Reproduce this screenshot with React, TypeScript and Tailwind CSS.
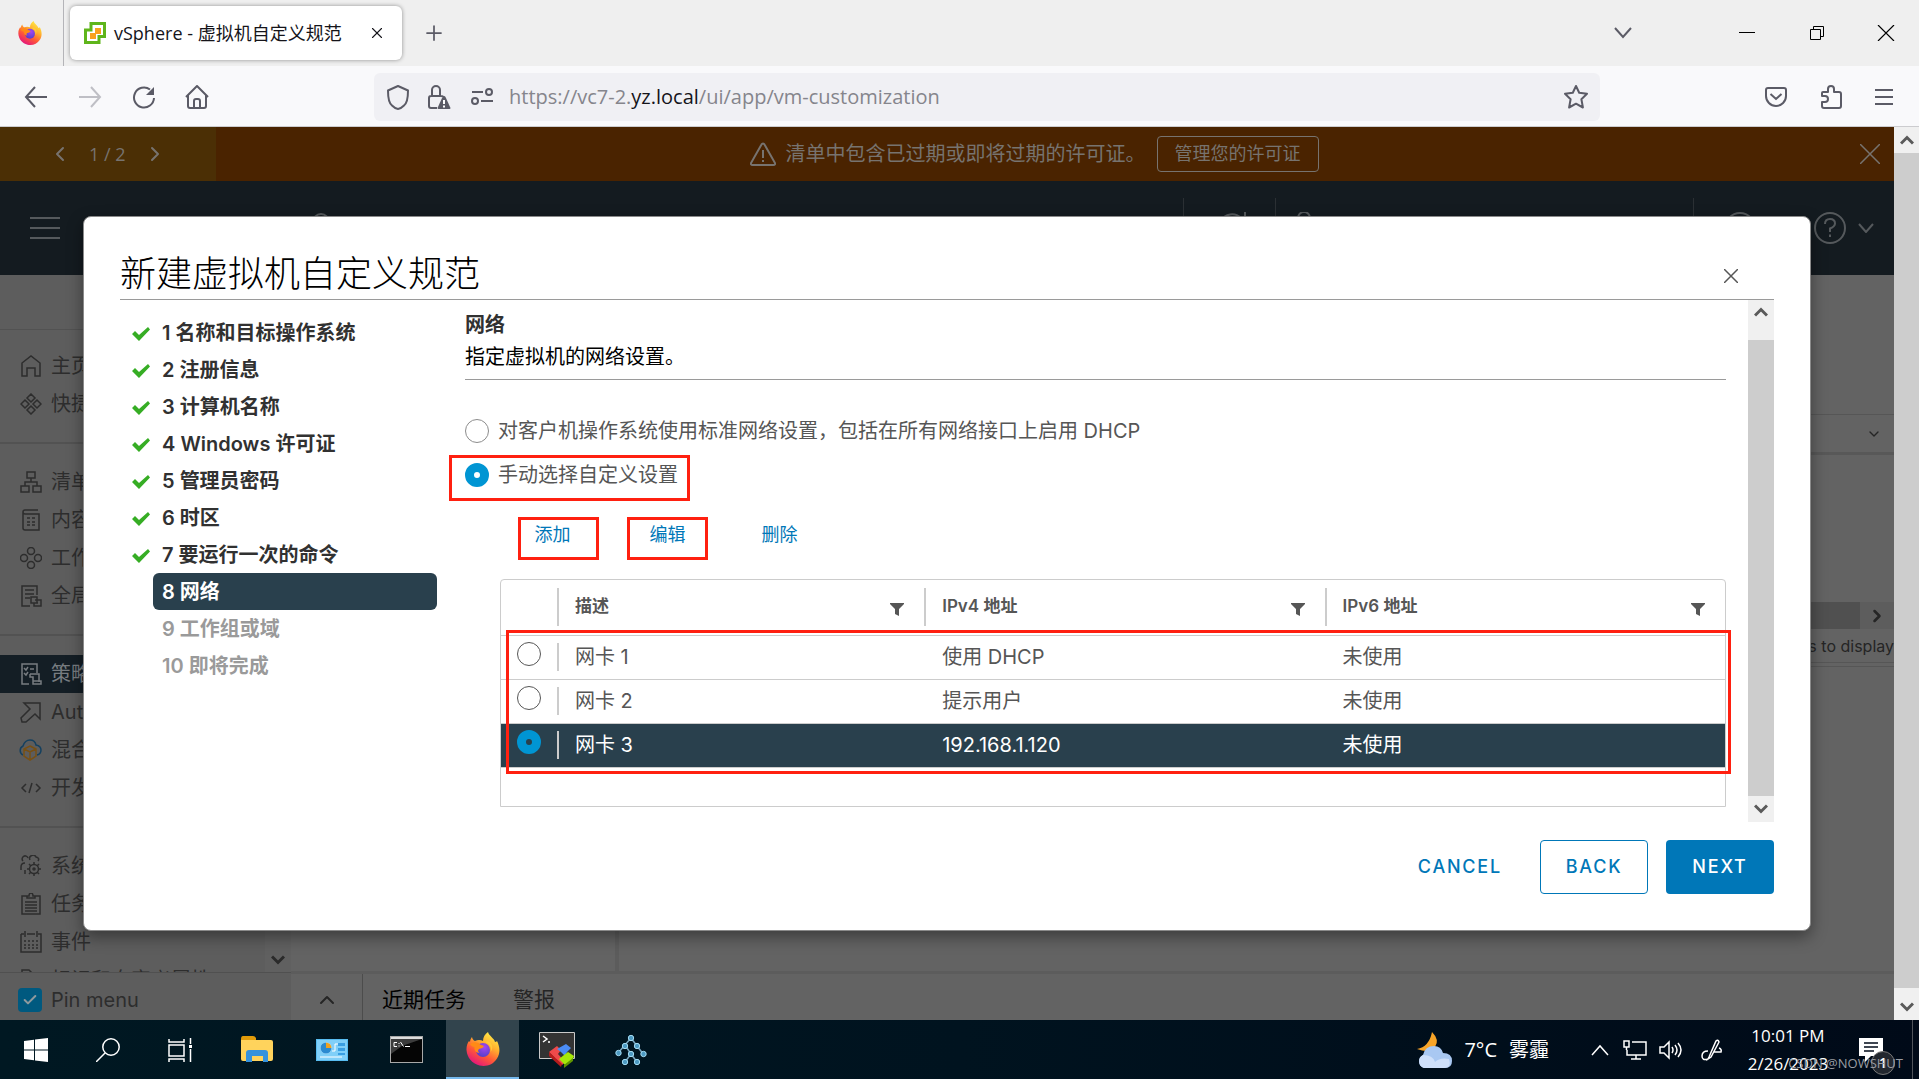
import { useState } from 'react';
import type { ReactNode } from 'react';
import { Check, ChevronDown, ChevronLeft, ChevronRight, ChevronUp, Plus, X } from 'lucide-react';

const FirefoxLogo = ({ className }: { className: string }) => (
  <svg viewBox="0 0 34 34" className={className} aria-hidden="true">
    <defs>
      <linearGradient id="ffBody" x1="0.85" y1="0.05" x2="0.3" y2="1">
        <stop offset="0" stopColor="#fff04a" />
        <stop offset="0.35" stopColor="#ffb02e" />
        <stop offset="0.65" stopColor="#ff5a36" />
        <stop offset="1" stopColor="#e3127f" />
      </linearGradient>
      <radialGradient id="ffGlobe" cx="0.6" cy="0.3" r="0.8">
        <stop offset="0" stopColor="#a545f2" />
        <stop offset="1" stopColor="#4b3fc4" />
      </radialGradient>
    </defs>
    <path d="M4 10 C4 8 5 6 6 5 C6.400 7 7.500 8.500 9 9 C12 7.500 15 8 17 9 C17 5 19 2 22 0 C23 4 28 6 29 10 C30.500 10 31 9 31 9 C34 15 34.500 21 31 26.500 C27 33 20 35 13.500 33.500 C6 31.500 1 25.500 0.500 18 C0.300 14.500 1.500 11 3 9 Z" fill="url(#ffBody)" />
    <circle cx="17" cy="18" r="7" fill="url(#ffGlobe)" />
    <path d="M4 12 C8 9.500 12 10 14 12.500 L18 14 C17 16.500 14 16.500 13 17 C11.500 18 12 20 13.500 21 C10 21 8 18 8.500 15 C7 15 5 14 4 12Z" fill="#ff8a16" />
    <path d="M19 10 C24 12 26 16 24.500 20 C28 16 26 11 22 9Z" fill="#ffca38" />
  </svg>
);

// Thin line icons of the side menu, 22x22
const ICONS: Record<string, ReactNode> = {
  home: <path d="M2 21V8l9-7 9 7v13h-5v-8H7v8z" />,
  shortcuts: <path d="M11 1l4 4-4 4-4-4zM5 7l4 4-4 4-4-4zM17 7l4 4-4 4-4-4zM11 13l4 4-4 4-4-4z" />,
  inventory: <path d="M7 1h8v6H7zM1 15h8v6H1zM13 15h8v6h-8zM11 7v4M5 15v-4h12v4" />,
  library: <path d="M3 3v16a2 2 0 0 0 2 2h14V5H5a2 2 0 0 1 0-4h13M7 9h3M12 9h3M7 13h3M12 13h3M7 16h3M12 16h3" />,
  workload: <><circle cx="11" cy="4" r="3.500" /><circle cx="4" cy="11" r="3.500" /><circle cx="18" cy="11" r="3.500" /><circle cx="11" cy="18" r="3.500" /></>,
  lists: <path d="M10 21H2V1h15v9M5 5h9M5 9h9M5 13h5M11 12h6v6h-6zM15 15h6v6h-7v-3M16 18h2" />,
  policy: <path d="M9 21H2V1h15v9M4 5l2 2 2-3M10 6h4M4 10l2 2 2-3M10 11h9v8M10 11v3h3v7h8v-3h-8" />,
  deploy: <path d="M4 2h16v16l-5-5-9 8H2l-1-4 9-9z" />,
  dev: <path d="M6 7l-4 4 4 4M16 7l4 4-4 4M12 6l-3 10" />,
  admin: <><circle cx="14" cy="14" r="4.500" /><circle cx="14" cy="14" r="1" /><path d="M14 7v3M14 18v3M7 14h3M18 14h3M9 9l2 2M17 17l2 2M19 9l-2 2M9 19l2-2M3 6a3 3 0 1 1 5-3M1 15v-3q0-4 4-4M10 5a3 3 0 0 1 6-3q4 1 2 4M5 15v4" /></>,
  tasks: <path d="M7 3H2v18h18V3h-5M7 5V3h2q0-3 2-3t2 3h2v2zM5 9h12M5 12h12M5 15h12M5 18h12" />,
  events: <><path d="M1 3h3M7 3h8M18 3h3v18H1V3M5 0v6M17 0v6" /><path strokeDasharray="2 2" d="M4 10h14M4 14h14M4 17h14" /></>,
  tags: <path d="M2 21V1h7l5 5v15z" />,
};

const SideIcon = ({ name }: { name: string }) => {
  if (name === 'hybrid') {
    return (
      <svg viewBox="0 0 24 22" className="-ml-0.5 h-6 w-6 shrink-0" fill="none" strokeWidth="1.500" aria-hidden="true">
        <path d="M5 16a5 5 0 0 1 0-9q2-6 7-6t6 5q5 1 5 5t-4 5" stroke="#14405f" />
        <path d="M12 7l6 3v7l-6 4-6-4v-7zM6 10l6 3 6-3M12 13v8" stroke="#785013" />
      </svg>
    );
  }
  return (
    <svg viewBox="0 0 22 22" className="size-[22px] shrink-0" fill="none" stroke="currentColor" strokeWidth="1.500" aria-hidden="true">
      {ICONS[name]}
    </svg>
  );
};

const menuGroups = [
  [
    { icon: 'home', label: '主页' },
    { icon: 'shortcuts', label: '快捷方式' },
  ],
  [
    { icon: 'inventory', label: '清单' },
    { icon: 'library', label: '内容库' },
    { icon: 'workload', label: '工作负载' },
    { icon: 'lists', label: '全局清单' },
  ],
  [
    { icon: 'policy', label: '策略配置', active: true },
    { icon: 'deploy', label: 'Auto Deploy' },
    { icon: 'hybrid', label: '混合云服务' },
    { icon: 'dev', label: '开发人员中心' },
  ],
  [
    { icon: 'admin', label: '系统管理' },
    { icon: 'tasks', label: '任务' },
    { icon: 'events', label: '事件' },
    { icon: 'tags', label: '标记和自定义属性' },
  ],
];

const steps = [
  '名称和目标操作系统',
  '注册信息',
  '计算机名称',
  'Windows 许可证',
  '管理员密码',
  '时区',
  '要运行一次的命令',
  '网络',
  '工作组或域',
  '即将完成',
];
const CURRENT_STEP = 8;

const nics = [
  { name: '网卡 1', ipv4: '使用 DHCP', ipv6: '未使用' },
  { name: '网卡 2', ipv4: '提示用户', ipv6: '未使用' },
  { name: '网卡 3', ipv4: '192.168.1.120', ipv6: '未使用' },
];

const BrowserChrome = () => (
  <header className="shrink-0 font-['Open_Sans','Noto_Sans_CJK_SC',sans-serif] text-[#5b5b66]">
    <div className="flex h-[66px] items-center bg-[#efefef]">
      <div className="flex h-full w-16 shrink-0 items-center border-r border-[#b4b4b8] pl-[18px]">
        <FirefoxLogo className="h-7 w-6" />
      </div>
      <div className="ml-1.5 flex h-[54px] w-[332px] items-center rounded-md bg-white pr-4 pl-3.5 shadow-[0_0_4px_rgba(0,0,0,0.4)]">
        <svg viewBox="0 0 22 22" className="size-[22px]" fill="none" aria-hidden="true">
          <path d="M7 1.500h13.500v13H15v6H1.500V8H7z" stroke="#5fb51b" strokeWidth="3" />
          <path d="M11 6h6v6h-6zM6 11h6v6H6z" fill="#f9a21b" />
        </svg>
        <span className="ml-2 flex-1 text-lg whitespace-nowrap text-[#15141a]">vSphere - 虚拟机自定义规范</span>
        <button aria-label="关闭标签页"><X className="size-[18px] text-[#15141a]" strokeWidth={1.5} /></button>
      </div>
      <button aria-label="新建标签页" className="ml-5"><Plus className="size-6" strokeWidth={1.75} /></button>
      <div className="ml-auto flex items-center text-black">
        <button aria-label="列出所有标签页" className="mr-[107px] text-[#5b5b66]">
          <svg viewBox="0 0 18 12" className="h-3 w-[18px]" fill="none" stroke="currentColor" strokeWidth="2"><path d="M1 1l8 9 8-9" /></svg>
        </button>
        <button aria-label="最小化" className="mr-[54px]">
          <svg viewBox="0 0 16 14" className="h-3.5 w-4" stroke="currentColor"><path d="M0 6.500h16" /></svg>
        </button>
        <button aria-label="还原" className="mr-[52px]">
          <svg viewBox="0 0 16 16" className="size-4" fill="none" stroke="currentColor"><path d="M1.500 4.500h10v10h-10zM4.500 4V1.500h10v10H12" /></svg>
        </button>
        <button aria-label="关闭" className="mr-6">
          <svg viewBox="0 0 18 16" className="h-4 w-[18px]" stroke="currentColor" strokeWidth="1.200"><path d="M1 0l16 16M17 0L1 16" /></svg>
        </button>
      </div>
    </div>
    <div className="flex h-[61px] items-center border-b border-[#cccccf] bg-[#f9f9fb] pt-0.5 pr-[26px] pl-6">
      <button aria-label="后退">
        <svg viewBox="0 0 24 24" className="size-6" fill="none" stroke="currentColor" strokeWidth="2"><path d="M23 12H2M11 2L2 12l9 10" /></svg>
      </button>
      <button aria-label="前进" className="ml-[30px] text-[#bfbfc5]">
        <svg viewBox="0 0 24 24" className="size-6" fill="none" stroke="currentColor" strokeWidth="2"><path d="M1 12h21M13 2l9 10-9 10" /></svg>
      </button>
      <button aria-label="重新加载" className="ml-[30px]">
        <svg viewBox="0 0 24 24" className="size-6" fill="none" stroke="currentColor" strokeWidth="2"><path d="M22 13a10 10 0 1 1-4-8.500" /><path d="M22 2v8h-8z" fill="currentColor" stroke="none" /></svg>
      </button>
      <button aria-label="主页" className="ml-[29px]">
        <svg viewBox="0 0 24 24" className="size-6" fill="none" stroke="currentColor" strokeWidth="2" strokeLinejoin="round"><path d="M1 12L12 1l11 11M3 10v11q0 2 2 2h14q2 0 2-2V10M9 23v-7q0-2 2-2h2q2 0 2 2v7" /></svg>
      </button>
      <div className="mr-[164px] ml-[165px] flex h-12 flex-1 items-center rounded-md bg-[#f0f0f4] pr-3 pl-3">
        <svg viewBox="0 0 24 26" className="h-[26px] w-6" fill="none" stroke="currentColor" strokeWidth="2" strokeLinejoin="round"><path d="M12 2l10 4.500q0 12-4 15-3 3-6 3.500-3-.5-6-3.500-4-3-4-15z" /></svg>
        <svg viewBox="0 0 24 26" className="ml-[17px] h-[26px] w-6" fill="none" stroke="currentColor" strokeWidth="2">
          <path d="M10 24H4q-2 0-2-2v-8q0-2 2-2h10q2 0 2 1M5 12V6a4 4 0 0 1 8 0v6" />
          <path d="M17 12q1 0 1.500 1l5 11q0 1-1 1h-11q-1 0-1-1l5-11q.5-1 1.500-1z" fill="currentColor" stroke="none" />
          <path d="M17 16v4M17 21.500v2" stroke="#fff" />
        </svg>
        <svg viewBox="0 0 22 20" className="ml-5 h-5 w-[22px]" fill="none" stroke="currentColor" strokeWidth="2"><circle cx="18" cy="5" r="3" /><circle cx="4" cy="14" r="3" /><path d="M1 5h11M10 14h12" /></svg>
        <label className="relative ml-4 flex-1 text-xl text-[#85858c]">
          https://vc7-2.<span className="text-[#15141a]">yz.local</span>/ui/app/vm-customization
          <input type="url" aria-label="地址栏" className="absolute inset-0 w-full bg-transparent outline-none" />
        </label>
        <button aria-label="加入书签">
          <svg viewBox="0 0 24 24" className="size-6" fill="none" stroke="currentColor" strokeWidth="2" strokeLinejoin="round"><path d="M12 1l3.200 6.800 7.800 1-5.600 5.400 1.500 8.300L12 18.700 5.100 22.500l1.500-8.300L1 8.800l7.800-1z" /></svg>
        </button>
      </div>
      <button aria-label="Pocket">
        <svg viewBox="0 0 24 22" className="h-[22px] w-6" fill="none" stroke="currentColor" strokeWidth="2"><path d="M4 2h16q2 0 2 2v6a10 10 0 0 1-20 0V4q0-2 2-2zM6.500 8l5.500 5 5.500-5" /></svg>
      </button>
      <button aria-label="扩展" className="ml-[31px]">
        <svg viewBox="0 0 24 26" className="h-[26px] w-6" fill="none" stroke="currentColor" strokeWidth="2" strokeLinejoin="round"><path d="M3 12V9q0-1 1-1h5V5a3 3 0 0 1 6 0v3h5q2 0 2 2v12q0 2-2 2H5q-2 0-2-2v-4h3a2.500 2.500 0 0 0 0-6z" /></svg>
      </button>
      <button aria-label="菜单" className="ml-8">
        <svg viewBox="0 0 18 18" className="size-[18px]" stroke="currentColor" strokeWidth="2"><path d="M0 2h18M0 9h18M0 16h18" /></svg>
      </button>
    </div>
  </header>
);

const ScrollArrow = ({ up }: { up?: boolean }) => (
  <svg viewBox="0 0 14 12" className="h-3 w-3.5" fill="none" stroke="#5a5a5a" strokeWidth="3" aria-hidden="true">
    <path d={up ? 'M1 9.500l6-6 6 6' : 'M1 2.500l6 6 6-6'} />
  </svg>
);

const Banner = () => (
  <div className="flex h-[54px] shrink-0 items-center bg-[#4a2300] text-[#77736f]">
    <div className="flex h-full w-[216px] items-center gap-[17px] bg-[#4b2f05] pl-12">
      <button aria-label="上一条"><ChevronLeft className="size-6" strokeWidth={2} /></button>
      <span className="font-['Open_Sans',sans-serif] text-lg">1 / 2</span>
      <button aria-label="下一条"><ChevronRight className="size-6" strokeWidth={2} /></button>
    </div>
    <div className="flex flex-1 items-center justify-center pr-2">
      <svg viewBox="0 0 26 24" className="h-6 w-[26px]" fill="none" stroke="currentColor" strokeWidth="2"><path d="M13 1.500q1 0 1.500 1L25 21q.5 2-1.500 2h-21Q.5 23 1 21L11.500 2.500q.5-1 1.500-1zM13 8v8M13 18v2" /></svg>
      <span className="ml-2.5 text-xl">清单中包含已过期或即将过期的许可证。</span>
      <button className="ml-[11px] h-9 rounded border border-[#77736f] px-[17px] text-lg">管理您的许可证</button>
    </div>
    <button aria-label="关闭" className="mr-3.5">
      <svg viewBox="0 0 20 20" className="size-5" stroke="currentColor" strokeWidth="1.500"><path d="M0 0l20 20M20 0L0 20" /></svg>
    </button>
  </div>
);

const AppHeader = () => (
  <div className="flex h-[94px] shrink-0 items-center bg-[#141b20] text-[#55595c]">
    <button aria-label="导航菜单" className="ml-[30px]">
      <svg viewBox="0 0 30 24" className="h-6 w-[30px]" stroke="currentColor" strokeWidth="2"><path d="M0 2h30M0 12h30M0 22h30" /></svg>
    </button>
    <svg viewBox="0 0 24 24" className="mb-2 ml-[249px] size-6" fill="none" stroke="currentColor" strokeWidth="2"><circle cx="12" cy="10" r="8" /><path d="M18 16l5 6" /></svg>
    <div className="ml-auto flex items-center">
      <span className="h-[60px] w-px bg-[#2b3034]" />
      <svg viewBox="0 0 32 32" className="ml-8 size-8" fill="none" stroke="currentColor" strokeWidth="2"><path d="M29 16a13 13 0 1 1-4-10M29 0v8h-8" /></svg>
      <span className="ml-[27px] h-[60px] w-px bg-[#2b3034]" />
      <svg viewBox="0 0 32 32" className="ml-3 size-8" fill="none" stroke="currentColor" strokeWidth="2"><circle cx="16" cy="6" r="6" /><path d="M4 30q0-14 12-14t12 14" /></svg>
      <span className="ml-[373px] h-[60px] w-px bg-[#2b3034]" />
      <svg viewBox="0 0 32 32" className="ml-[30px] size-8" fill="none" stroke="currentColor" strokeWidth="2"><circle cx="16" cy="16" r="15" /><path d="M9 19q7 8 14 0" /></svg>
      <button aria-label="帮助" className="ml-[58px] flex items-center gap-3">
        <svg viewBox="0 0 32 32" className="size-8" fill="none" stroke="currentColor" strokeWidth="2"><circle cx="16" cy="16" r="15" /><path d="M11 12q0-5 5-5t5 4.500q0 3-5 5V20M16 22.500V25" /></svg>
        <svg viewBox="0 0 16 10" className="h-2.5 w-4" fill="none" stroke="currentColor" strokeWidth="2"><path d="M1 1l7 8 7-8" /></svg>
      </button>
      <span className="w-5" />
    </div>
  </div>
);

const SideMenu = () => (
  <aside className="flex w-[291px] shrink-0 flex-col bg-[#5d5d5d] text-[#2d2d2d]">
    <div className="flex min-h-0 flex-1 overflow-hidden">
      <nav className="w-[265px] pt-[54px]">
        {menuGroups.map((group, i) => (
          <div key={i}>
            <div className={i === 0 ? 'h-[18px] border-t border-[#525252]' : 'flex h-10 items-center'}>
              {i > 0 && <div className="h-0.5 w-full bg-[#525252]" />}
            </div>
            {group.map((item) => (
              <a
                key={item.label}
                href="#"
                className={`flex h-[38px] items-center gap-[9px] pl-5 text-xl whitespace-nowrap ${
                  'active' in item ? 'bg-[#141e25] text-[#777c80]' : ''
                }`}
              >
                <SideIcon name={item.icon} />
                {item.label}
              </a>
            ))}
          </div>
        ))}
      </nav>
      <div className="flex flex-1 items-end justify-center bg-[#606060] pb-1.5">
        <svg viewBox="0 0 14 12" className="h-3 w-3.5" fill="none" stroke="#2a2a2a" strokeWidth="3"><path d="M1 2.500l6 6 6-6" /></svg>
      </div>
    </div>
    <label className="flex h-12 items-center gap-[9px] border-t border-[#505050] pt-1.5 pl-[18px] text-xl">
      <span className="relative flex size-6">
        <input type="checkbox" defaultChecked className="size-6 appearance-none rounded bg-[#00597f]" />
        <Check className="pointer-events-none absolute top-1 left-1 size-4 text-[#8f9a9e]" strokeWidth={3} />
      </span>
      Pin menu
    </label>
  </aside>
);

const Workspace = () => (
  <div className="flex min-w-0 flex-1 flex-col bg-[#636363] text-[#252525]">
    <div className="flex min-h-0 flex-1">
      <div className="w-[328px] border-r-4 border-[#5c5c5c]" />
      <div className="flex flex-1 flex-col">
        <div className="h-[140px] border-b border-[#565656]" />
        <div className="flex h-10 items-center justify-end border-b-[3px] border-[#585858] pr-3">
          <ChevronDown className="size-4" />
        </div>
        <div className="h-[147px]" />
        <div className="flex h-[27px] justify-end bg-[#505050]">
          <span className="flex w-[34px] items-center justify-center bg-[#5d5d5d]"><ChevronRight className="size-5" strokeWidth={3} /></span>
        </div>
        <div className="flex h-[34px] items-center justify-end border-b border-[#565656] text-base">No items to display</div>
        <div className="h-1 border-b border-[#565656]" />
      </div>
    </div>
    <div className="flex h-[49px] items-center border-t-[3px] border-[#5c5c5c] text-[21px]">
      <button aria-label="展开" className="flex h-full w-[72px] items-center justify-center border-r border-[#4c4c4c] pt-1.5">
        <ChevronUp className="size-6" strokeWidth={2} />
      </button>
      <button className="ml-[19px] pt-1.5 text-black">近期任务</button>
      <button className="ml-[47px] pt-1.5">警报</button>
    </div>
  </div>
);

const StepList = () => (
  <ol className="w-[317px] shrink-0 pt-3.5 text-xl font-semibold text-[#313131]">
    {steps.map((step, i) => {
      const n = i + 1;
      return (
        <li key={step} className="flex h-[37px] items-center">
          <span className="w-[33px] shrink-0 pl-3">
            {n < CURRENT_STEP && (
              <svg viewBox="0 0 18 14" className="mt-0.5 h-3.5 w-[18px]" aria-label="已完成"><path d="M0 7l3-3 4 4 9-8 2 2.500L7 14z" fill="#36ad24" /></svg>
            )}
          </span>
          <span
            className={`flex h-full flex-1 items-center rounded-md pl-[9px] whitespace-pre ${
              n === CURRENT_STEP ? 'bg-[#29404d] text-white' : n > CURRENT_STEP ? 'text-[#9a9a9a]' : ''
            }`}
          >
            {n} {step}
          </span>
        </li>
      );
    })}
  </ol>
);

const radioClass =
  'size-6 shrink-0 appearance-none rounded-full border checked:border-9 checked:border-[#0095d3]';

const FilterIcon = () => (
  <svg viewBox="0 0 14 13" className="h-[13px] w-3.5" fill="#565656" aria-hidden="true"><path d="M0 0h14v1L9 6v7l-4-2V6L0 1z" /></svg>
);

const NicTable = () => {
  const [selected, setSelected] = useState(2);
  return (
    <div className="relative ml-[35px] rounded-t border border-[#cccccc] pb-[38px]">
      <table className="w-full table-fixed border-collapse text-left text-xl text-[#565656]">
        <colgroup>
          <col className="w-14" />
          <col className="w-[30%]" />
          <col />
          <col />
        </colgroup>
        <thead>
          <tr className="h-[55px] border-b border-[#cccccc] text-[17px]">
            <td />
            {['描述', 'IPv4 地址', 'IPv6 地址'].map((title) => (
              <th key={title} scope="col" className="p-0 font-semibold">
                <div className="flex h-[38px] items-center justify-between border-l-2 border-[#cccccc] pr-5 pl-4">
                  {title}
                  <button aria-label={`筛选 ${title}`} className="pt-1"><FilterIcon /></button>
                </div>
              </th>
            ))}
          </tr>
        </thead>
        <tbody>
          {nics.map((nic, i) => (
            <tr key={nic.name} className={`h-11 border-b border-[#cccccc] ${selected === i ? 'bg-[#29404d] text-white' : ''}`}>
              <td className="p-0 pl-4">
                <input
                  type="radio"
                  name="nic"
                  aria-label={nic.name}
                  checked={selected === i}
                  onChange={() => setSelected(i)}
                  className={`${radioClass} mb-1.5 block border-[#565656]`}
                />
              </td>
              <td className="p-0"><div className="border-l-2 border-[#cccccc] pl-4 leading-7">{nic.name}</div></td>
              <td className="p-0 pl-[18px] leading-7">{nic.ipv4}</td>
              <td className="p-0 pl-[18px] leading-7">{nic.ipv6}</td>
            </tr>
          ))}
        </tbody>
      </table>
      <div className="pointer-events-none absolute top-[50px] -right-1.5 left-[5px] h-[144px] border-3 border-[#ff2010]" />
    </div>
  );
};

const NetworkStep = () => (
  <section className="min-w-0 flex-1 pr-[22px] pl-7">
    <h2 className="pt-[11px] text-xl leading-7 font-bold text-[#313131]">网络</h2>
    <p className="border-b border-[#9a9a9a] pt-1 pb-2 text-xl leading-7 text-black">指定虚拟机的网络设置。</p>
    <div className="mt-[37px] text-xl text-[#565656]">
      <label className="flex h-7 items-center gap-[9px]">
        <input type="radio" name="mode" className={`${radioClass} border-[#8c8c8c]`} />
        对客户机操作系统使用标准网络设置，包括在所有网络接口上启用 DHCP
      </label>
      <label className="relative mt-4 flex h-7 w-fit items-center gap-[9px]">
        <input type="radio" name="mode" defaultChecked className={`${radioClass} border-[#8c8c8c]`} />
        手动选择自定义设置
        <span className="pointer-events-none absolute -top-1.5 -right-3 -bottom-3 -left-4 border-3 border-[#ff2010]" />
      </label>
    </div>
    <div className="mt-7 mb-[19px] ml-[53px] flex h-[43px] gap-7 text-lg text-[#0077b8]">
      <button className="h-[43px] w-[81px] border-3 border-[#ff2010] pr-3 pb-2">添加</button>
      <button className="h-[43px] w-[81px] border-3 border-[#ff2010] pb-2">编辑</button>
      <button className="h-[43px] w-[81px] pr-0 pb-2 pl-1.5">删除</button>
    </div>
    <NicTable />
  </section>
);

const Wizard = () => (
  <div role="dialog" aria-labelledby="wizard-title" className="flex min-w-0 flex-1 flex-col rounded-lg border border-[#8a8a8a] bg-white px-9 shadow-[0_6px_16px_rgba(0,0,0,0.4)]">
    <div className="flex h-[83px] shrink-0 items-center justify-between border-b border-[#9a9a9a] pt-8">
      <h1 id="wizard-title" className="text-4xl font-light text-black">新建虚拟机自定义规范</h1>
      <button aria-label="关闭" className="mt-1 mr-9">
        <svg viewBox="0 0 14 14" className="size-3.5" stroke="#565656" strokeWidth="1.500"><path d="M0 0l14 14M14 0L0 14" /></svg>
      </button>
    </div>
    <div className="flex min-h-0 flex-1">
      <StepList />
      <NetworkStep />
      <div className="flex w-[26px] shrink-0 flex-col bg-[#f0f0f0]">
        <button aria-label="向上滚动" className="flex h-10 justify-center pt-1.5"><ScrollArrow up /></button>
        <div className="flex-1 bg-[#cdcdcd]" />
        <button aria-label="向下滚动" className="flex h-[26px] items-center justify-center"><ScrollArrow /></button>
      </div>
    </div>
    <div className="flex shrink-0 items-center justify-end gap-[18px] pt-[18px] pb-9 text-lg font-medium tracking-widest">
      <button className="px-5 text-[#0077b8]">CANCEL</button>
      <button className="h-[54px] w-[108px] rounded border border-[#0077b8] text-[#0077b8]">BACK</button>
      <button className="h-[54px] w-[108px] rounded bg-[#0077b8] text-white">NEXT</button>
    </div>
  </div>
);

const Taskbar = () => (
  <footer className="relative flex h-[59px] shrink-0 items-center bg-linear-to-r from-[#001822] via-[#00131f] to-[#000a18] font-['Open_Sans','Noto_Sans_CJK_SC',sans-serif] text-white">
    <button aria-label="开始" className="flex w-[72px] justify-center">
      <svg viewBox="0 0 24 24" className="size-6" fill="#fff"><path d="M0 3l10-1.300V11.500H0zM11 1.500L24 0v11.500H11zM0 12.500h10v9.800L0 21zM11 12.500h13V24l-13-1.500z" /></svg>
    </button>
    <button aria-label="搜索" className="flex w-[72px] justify-center">
      <svg viewBox="0 0 24 24" className="size-6" fill="none" stroke="#fff" strokeWidth="1.500"><circle cx="15" cy="9" r="8.200" /><path d="M9 15l-9 9" /></svg>
    </button>
    <button aria-label="任务视图" className="flex w-[72px] justify-center">
      <svg viewBox="0 0 24 24" className="size-6" fill="none" stroke="#fff" strokeWidth="1.500"><path d="M1 1v3h15V1M1 7h15v11H1zM1 24v-3h15v3M22.500 0v6M22.500 11v13" /><path d="M21 7h3v3h-3z" fill="#fff" stroke="none" /></svg>
    </button>
    <button aria-label="文件资源管理器" className="flex w-[82px] justify-center">
      <svg viewBox="0 0 32 27" className="h-[27px] w-8"><path d="M0 3q0-3 2-3h10q2 0 3 2v4H0z" fill="#e29c0a" /><path d="M0 4h30q2 0 2 2v17q0 2-2 2H2q-2 0-2-2z" fill="#ffd35c" /><path d="M5 26v-9q0-3 3-3h16q3 0 3 3v9h-5v-6H11v6z" fill="#3592dc" /></svg>
    </button>
    <button aria-label="控制面板" className="flex w-[68px] justify-center">
      <svg viewBox="0 0 32 22" className="h-[22px] w-8"><path d="M0 0h32v22H0z" fill="#58bcf0" /><path d="M1 1h30v20H1z" fill="#80cff8" /><circle cx="10" cy="9" r="5.500" fill="#eef8ff" /><path d="M10 9V3.500A5.500 5.500 0 0 1 15.500 9z" fill="#f0a121" /><path d="M10 9h5.500A5.500 5.500 0 1 1 10 3.500z" fill="#2c8ad0" /><path d="M22 4h7v3h-7zM22 9h7v3h-7zM22 14h7v2h-7z" fill="#3a9fe2" /><path d="M16 12h3V5h3M4 18h22" stroke="#fff" fill="none" /></svg>
    </button>
    <button aria-label="命令提示符" className="flex w-20 justify-center">
      <svg viewBox="0 0 33 27" className="h-[27px] w-[33px]"><path d="M0 0h33v27H0z" fill="#a8a8a8" /><path d="M1 3h31v23H1z" fill="#050505" /><path d="M1 3h31L12 10 1 18z" fill="#3c3c3c" /><path d="M1 1h31v2H1z" fill="#ddd" /><path d="M7 6.500H4v4h3M9 7v1M9 9.500v1M10.500 6l3 4.500M15 10.500h5" stroke="#fff" fill="none" /></svg>
    </button>
    <button aria-label="Firefox" className="flex h-full w-[73px] items-center justify-center border-b-2 border-[#76b9ed] bg-[#32444d]"><FirefoxLogo className="size-[34px]" /></button>
    <button aria-label="MobaXterm" className="flex w-[76px] justify-center">
      <svg viewBox="0 0 36 36" className="size-9"><path d="M.5.500h35v26H.5z" fill="#333" stroke="#c9c9c9" /><path d="M4 4l4 3-4 3M9 10h2" stroke="#fff" strokeWidth="1.500" fill="none" /><path d="M10 20l8-6 4 4-3 4 7 8-3 3z" fill="#ee4a4a" /><path d="M10 20v4l12 11 1-3z" fill="#b51c1c" /><path d="M18 17l9-5 5 4-4 4-2 4-4-4z" fill="#4b8cf5" /><path d="M20 27l5-4 4-3 6 4-1 3-8 6z" fill="#a6e80a" /><path d="M25 33v3l9-7v-3z" fill="#5f9600" /></svg>
    </button>
    <button aria-label="拓扑" className="flex w-[72px] justify-center">
      <svg viewBox="0 0 32 32" className="size-8"><path d="M16 4l-6 7-7 8M16 4l6 8 7 9M10 11l6 9-6 8M16 20l6 8" stroke="#7ba9c2" strokeWidth="1.500" fill="none" /><g fill="#4d9ac2" stroke="#a4dcf3"><circle cx="16" cy="4" r="2.700" /><circle cx="10" cy="12" r="2.700" /><circle cx="22" cy="12" r="2.700" /><circle cx="3.500" cy="19" r="2.700" /><circle cx="16" cy="20" r="2.700" /><circle cx="28.500" cy="20" r="2.700" /><circle cx="10" cy="28" r="2.700" /><circle cx="22" cy="28" r="2.700" /></g></svg>
    </button>
    <div className="ml-auto flex h-full items-center">
      <svg viewBox="0 0 36 36" className="size-9"><path d="M16 0q8 8 3 15t-18 2q12-2 15-17z" fill="#f7a428" /><path d="M8 36a7 7 0 0 1-1-13q2-9 11-9 7 0 9 7 9 0 9 8 0 7-7 7z" fill="#a9c8f2" /><path d="M8 36a7 7 0 0 1-1-13q10 0 12 7 5-5 14-3 3 9-5 9z" fill="#cfe0fa" /></svg>
      <span className="ml-3 text-xl">7°C</span>
      <span className="ml-3 text-xl">雾霾</span>
      <svg viewBox="0 0 18 12" className="ml-[42px] h-3 w-[18px]" fill="none" stroke="#fff" strokeWidth="1.500"><path d="M1 11l8-9 8 9" /></svg>
      <svg viewBox="0 0 24 20" className="ml-3.5 h-5 w-6" fill="none" stroke="#fff" strokeWidth="1.500"><path d="M9 2h14v13H4v-5M1 1h5v6H1zM3.500 7v3M13 15v4M8 19h10" /></svg>
      <svg viewBox="0 0 24 20" className="ml-3 h-5 w-6" fill="none" stroke="#fff" strokeWidth="1.500"><path d="M1 7h4l5-5v16l-5-5H1zM13 7q2 3 0 6M16 5q4 5 0 10M19 3q6 7 0 14" /></svg>
      <svg viewBox="0 0 22 22" className="ml-[18px] size-[22px]" fill="none" stroke="#fff" strokeWidth="1.500"><path d="M8 18L15 2q2-2 3 1L10 18l-3 2zM7 12q-6 0-6 5t6 3M13 13h7q1-3-2-4" /></svg>
      <time className="ml-5 w-[90px] text-center text-[17px] leading-7">10:01 PM<br />2/26/2023</time>
      <button aria-label="通知" className="mr-9 ml-[26px]">
        <svg viewBox="0 0 24 28" className="h-7 w-6"><path d="M0 2h24v18H12l-6 6v-6H0z" fill="#fff" /><path d="M5 7h14M5 11h14M5 15h10" stroke="#000a18" strokeWidth="1.500" /></svg>
      </button>
    </div>
    <span className="absolute right-6 bottom-1 flex size-6 items-center justify-center rounded-full border border-[#777] bg-[#22272f] text-sm font-semibold">1</span>
    <span className="absolute right-4 bottom-1.5 text-[13px] text-[#9a9da3]">CSDN @NOWSHUT</span>
    <span className="absolute right-1.5 h-full w-px bg-[#50545b]" />
  </footer>
);

function App() {
  return (
    <div className="flex h-screen flex-col overflow-hidden">
      <BrowserChrome />
      <div className="flex min-h-0 flex-1 font-['Inter','Noto_Sans_CJK_SC',sans-serif]">
        <main className="relative flex min-w-0 flex-1 flex-col">
          <Banner />
          <AppHeader />
          <div className="flex min-h-0 flex-1">
            <SideMenu />
            <Workspace />
          </div>
          {/* Wizard dialog over the dimmed page */}
          <div className="absolute inset-0 flex px-[83px] py-[89px]">
            <Wizard />
          </div>
        </main>
        <div className="flex w-[25px] shrink-0 flex-col bg-[#f0f0f0]">
          <button aria-label="向上滚动" className="flex h-[26px] items-center justify-center"><ScrollArrow up /></button>
          <div className="flex-1 bg-[#cdcdcd]" />
          <button aria-label="向下滚动" className="flex h-8 items-center justify-center pt-1.5"><ScrollArrow /></button>
        </div>
      </div>
      <Taskbar />
    </div>
  );
}

export default App;
